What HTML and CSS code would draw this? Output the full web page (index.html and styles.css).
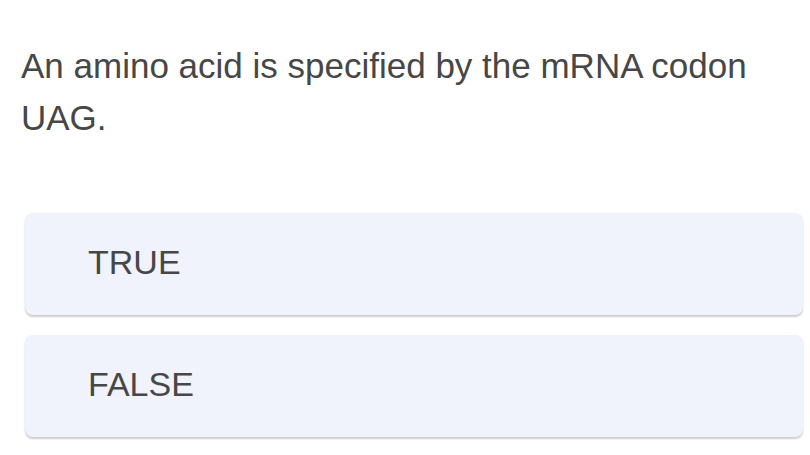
FILE: index.html
```html
<!DOCTYPE html>
<html>
<head>
<meta charset="utf-8">
<link rel="stylesheet" href="styles.css">
</head>
<body>
<div class="quiz">
  <p class="question">An amino acid is specified by the mRNA codon UAG.</p>
  <div class="options">
    <div class="option">TRUE</div>
    <div class="option">FALSE</div>
  </div>
</div>
</body>
</html>
```
FILE: styles.css
```css
html, body {
  margin: 0;
  padding: 0;
  background: #ffffff;
}
.quiz {
  width: 810px;
  height: 455px;
  overflow: hidden;
  font-family: "Liberation Sans", Arial, sans-serif;
  color: #474747;
}
.question {
  margin: 0;
  padding: 40px 40px 0 21px;
  font-size: 35px;
  line-height: 52px;
}
.options {
  display: flex;
  flex-direction: column;
  gap: 20px;
  padding: 69px 7px 0 25px;
}
.option {
  height: 102px;
  box-sizing: border-box;
  display: flex;
  align-items: center;
  padding-left: 63px;
  padding-bottom: 4px;
  background: #f0f3fb;
  border-radius: 8px;
  box-shadow: 0 2px 2px rgba(0, 0, 0, 0.2), 0 0 1px rgba(0, 0, 0, 0.06);
  font-size: 34px;
  color: #474747;
}
```
